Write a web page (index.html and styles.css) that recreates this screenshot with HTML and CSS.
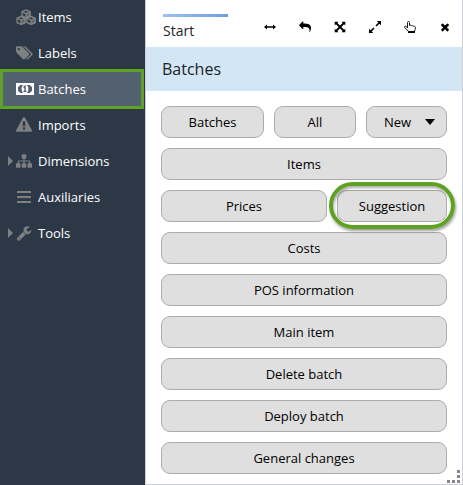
FILE: index.html
```html
<!DOCTYPE html>
<html lang="en">
<head>
<meta charset="utf-8">
<title>Batches</title>
<link rel="stylesheet" href="styles.css">
</head>
<body>
<div class="app">
  <nav class="sidebar">
    <a class="nav-item"><span class="caret"></span><svg class="icon" viewBox="0 0 20 16"><g class="cubes"><path d="M10 1l4 1.700v4.300l-4 1.900-4-1.900v-4.300zM5 7.500l4 1.700v4.300l-4 1.900-4-1.900v-4.300zM15 7.500l4 1.700v4.300l-4 1.900-4-1.900v-4.300z"/><path class="solid" d="M10 4.600l4-1.900v4.300l-4 1.900zM5 11.100l4-1.900v4.300l-4 1.900zM15 11.100l4-1.900v4.300l-4 1.900z"/><path d="M6 2.800l4 1.800M1 9.200l4 1.900M11 9.200l4 1.900"/></g></svg><span>Items</span></a>
    <a class="nav-item"><span class="caret"></span><svg class="icon" viewBox="128 0 2280 1792"><path d="M576 448q0-53-37.500-90.500t-90.500-37.500-90.500 37.500-37.500 90.500 37.500 90.500 90.500 37.500 90.500-37.500 37.500-90.500zm1067 576q0 53-37 90l-491 492q-39 37-91 37-53 0-90-37l-715-716q-38-37-64.500-101t-26.500-117v-416q0-52 38-90t90-38h416q53 0 117 26.500t102 64.500l715 714q37 39 37 91zm384 0q0 53-37 90l-491 492q-39 37-91 37-36 0-59-14t-53-45l470-470q37-37 37-90 0-52-37-91l-715-714q-38-38-102-64.500t-117-26.500h224q53 0 117 26.500t102 64.500l715 714q37 39 37 91z"/></svg><span>Labels</span></a>
    <a class="nav-item active"><span class="caret"></span><svg class="icon" viewBox="0 0 20 16"><path fill-rule="evenodd" d="M0 2h18v12H0zM4 4a2.500 2.500 0 0 1-2 2v4a2.500 2.500 0 0 1 2 2h10a2.500 2.500 0 0 1 2-2v-4a2.500 2.500 0 0 1-2-2z"/><ellipse cx="9" cy="8" rx="3.400" ry="4.200"/><path class="cut" d="M7.500 6.500l1.500-1.200v5M7.500 10.400h3"/></svg><span>Batches</span></a>
    <a class="nav-item"><span class="caret"></span><svg class="icon" viewBox="0 0 2240 1792"><path d="M1024 1375v-190q0-14-9.500-23.500t-22.500-9.500h-192q-13 0-22.500 9.500t-9.500 23.500v190q0 14 9.500 23.500t22.500 9.500h192q13 0 22.500-9.500t9.500-23.500zm-2-374l18-459q0-12-10-19-13-11-24-11h-220q-11 0-24 11-10 7-10 21l17 457q0 10 10 16.500t24 6.500h185q14 0 23.500-6.500t10.500-16.500zm-14-934l768 1408q35 63-2 126-17 29-46.500 46t-63.500 17h-1536q-34 0-63.500-17t-46.500-46q-37-63-2-126l768-1408q17-31 47-49t65-18 65 18 47 49z"/></svg><span>Imports</span></a>
    <a class="nav-item"><span class="caret on"></span><svg class="icon" viewBox="0 0 2240 1792"><path d="M1792 1248v320q0 40-28 68t-68 28h-320q-40 0-68-28t-28-68v-320q0-40 28-68t68-28h96v-192h-512v192h96q40 0 68 28t28 68v320q0 40-28 68t-68 28h-320q-40 0-68-28t-28-68v-320q0-40 28-68t68-28h96v-192h-512v192h96q40 0 68 28t28 68v320q0 40-28 68t-68 28h-320q-40 0-68-28t-28-68v-320q0-40 28-68t68-28h96v-192q0-52 38-90t90-38h512v-192h-96q-40 0-68-28t-28-68v-320q0-40 28-68t68-28h320q40 0 68 28t28 68v320q0 40-28 68t-68 28h-96v192h512q52 0 90 38t38 90v192h96q40 0 68 28t28 68z"/></svg><span>Dimensions</span></a>
    <a class="nav-item"><span class="caret"></span><svg class="icon" viewBox="0 0 20 16"><path d="M1 2h14v2H1zM1 7h14v2H1zM1 12h14v2H1z"/></svg><span>Auxiliaries</span></a>
    <a class="nav-item"><span class="caret on"></span><svg class="icon" viewBox="0 0 2240 1792"><path d="M448 1472q0-26-19-45t-45-19-45 19-19 45 19 45 45 19 45-19 19-45zm644-420l-682 682q-37 37-90 37-52 0-91-37l-106-108q-38-36-38-90 0-53 38-91l681-681q39 98 114.500 173.500t173.500 114.500zm634-435q0 39-23 106-47 134-164.500 217.500t-258.500 83.500q-185 0-316.500-131.500t-131.500-316.500 131.500-316.500 316.500-131.500q58 0 121.500 16.500t107.500 46.500q16 11 16 28t-16 28l-293 169v224l193 107q5-3 79-48.500t135.500-81 70.500-35.500q15 0 23.500 10t8.500 25z"/></svg><span>Tools</span></a>
  </nav>
  <main class="panel">
    <header class="topbar">
      <div class="tab">Start</div>
      <div class="tools">
        <svg viewBox="0 0 12 12"><path d="M0 6l3-2.500v1.800h6V3.500L12 6 9 8.500V6.700H3v1.800z"/></svg>
        <svg viewBox="0 0 1792 1792"><path d="M1792 1120q0 166-127 451-3 7-10.500 24t-13.500 30-13 22q-12 17-28 17-15 0-23.500-10t-8.500-25q0-9 2.500-26.500t2.500-23.500q5-68 5-123 0-101-17.500-181t-48.500-138.500-80-101-105.500-69.500-133-42.500-154-21.500-175.500-6h-224v256q0 26-19 45t-45 19-45-19l-512-512q-19-19-19-45t19-45l512-512q19-19 45-19t45 19 19 45v256h224q713 0 875 403 53 134 53 333z"/></svg>
        <svg viewBox="0 0 12 12"><path d="M.7.700h3.800L3.300 1.900 6 4.600l2.700-2.700L7.500.700h3.800v3.800l-1.200-1.200L7.400 6l2.700 2.700 1.200-1.200v3.800H7.500l1.200-1.200L6 7.400l-2.700 2.700 1.200 1.200H.7V7.500l1.200 1.200L4.600 6 1.900 3.300.7 4.500z"/></svg>
        <svg viewBox="0 0 12 12"><path d="M7.700 0H12v4.300l-1.600-1.600-2.900 2.800-1-1 2.800-2.900zM0 7.700l1.600 1.600 2.900-2.800 1 1-2.800 2.900L4.300 12H0z"/></svg>
        <svg viewBox="0 0 12 12"><path class="hand" d="M3.500 7V1.500C3.500.2 5.500.2 5.500 1.500v3C6 3.900 7.200 4 7.500 4.800c.8-.5 1.700-.1 1.900.5 1-.4 2.100.2 2.100 1.200 0 1.600-.9 2.400-.9 4H4.500C4 9.300 2.300 8.300.7 6.600.1 5.600 1.200 4.600 2.100 5.300z"/><path d="M4 10.200h7V12H4z"/></svg>
        <svg viewBox="0 0 1792 1792"><path d="M1490 1322q0 40-28 68l-136 136q-28 28-68 28t-68-28l-294-294-294 294q-28 28-68 28t-68-28l-136-136q-28-28-28-68t28-68l294-294-294-294q-28-28-28-68t28-68l136-136q28-28 68-28t68 28l294 294 294-294q28-28 68-28t68 28l136 136q28 28 28 68t-28 68l-294 294 294 294q28 28 28 68z"/></svg>
      </div>
    </header>
    <h1 class="title">Batches</h1>
    <div class="actions">
      <div class="row top"><button>Batches</button><button>All</button><button class="menu">New<i class="down"></i></button></div>
      <button>Items</button>
      <div class="row pair"><button>Prices</button><button class="marked">Suggestion</button></div>
      <button>Costs</button>
      <button>POS information</button>
      <button>Main item</button>
      <button>Delete batch</button>
      <button>Deploy batch</button>
      <button>General changes</button>
    </div>
    <svg class="grip" viewBox="0 0 13 13"><path d="M10 0h3v3h-3zM10 5h3v3h-3zM10 10h3v3h-3zM5 10h3v3H5zM0 10h3v3H0z"/></svg>
  </main>
</div>
</body>
</html>
```

FILE: styles.css
```css
* { box-sizing: border-box; }
body { margin: 0; font: 13px/18px "Open Sans", "Noto Sans", sans-serif; color: #000; }
.app { display: grid; grid-template-columns: 145px 1fr; height: 485px; overflow: hidden; }
.sidebar { background: #2d3847; display: flex; flex-direction: column; }
.nav-item { display: flex; align-items: center; height: 36px; padding-left: 8px; color: #fff; }
.nav-item:first-child { height: 35px; padding-bottom: 1px; }
.icon { width: 20px; height: 16px; margin-right: 2px; fill: #7d7f80; flex: none; }
.caret { width: 8px; height: 10px; flex: none; }
.caret.on::before { content: ""; display: block; width: 0; border: 5px solid transparent; border-left-color: #7d7f80; border-right: 0; }
.cubes { fill: none; stroke: #7d7f80; stroke-width: 1.4; stroke-linejoin: round; }
.solid { fill: #7d7f80; fill-opacity: .6; }
.active { height: 40px; margin: -2px 1px -2px 0; padding-left: 5px; border: 3px solid #5fa122; background: #536070; }
.active .icon { fill: #fff; }
.cut { fill: none; stroke: #536070; stroke-width: 1.4; }
.panel { position: relative; background: #fff; border: 1px solid #ccd0d8; border-top: 0; }
.topbar { display: flex; height: 47px; padding: 14px 11px 0 17px; justify-content: space-between; }
.tab { width: 65px; height: 30px; padding-top: 7px; font-size: 14px; line-height: 20px; color: #222; background: linear-gradient(90deg, #9fc0ee, #6c9ee2) top / 100% 3px no-repeat; }
.tools { display: flex; gap: 23px; padding-top: 7px; }
.tools svg { width: 12px; height: 12px; }
.hand { fill: #fff; stroke: #000; stroke-width: .9; }
.title { margin: 0; height: 44px; padding-left: 16px; background: #d3e6f6; font-size: 16px; font-weight: 400; line-height: 44px; color: #222; }
.actions { display: flex; flex-direction: column; gap: 10px; padding: 15px 15px 0; }
.row { display: grid; column-gap: 10px; }
.top { grid-template-columns: 103px 82px 1fr; }
.pair { grid-template-columns: 166px 1fr; }
button { height: 32px; padding: 0; border: 1px solid #acacac; border-radius: 9px; background: #dfdfdf; font: inherit; color: #000; }
.menu { display: flex; align-items: center; padding-left: 17px; }
.down { margin-left: 14px; border: 5px solid transparent; border-top: 6px solid #000; border-bottom: 0; }
.marked { position: relative; }
.marked::after { content: ""; position: absolute; inset: -9px -9px -8px; border: 4px solid #5fa122; border-radius: 24px; box-shadow: 1px 2px 3px #0006, inset 1px 2px 3px #0005; }
.grip { position: absolute; right: 2px; bottom: 1px; width: 13px; height: 13px; fill: #888; }
```
